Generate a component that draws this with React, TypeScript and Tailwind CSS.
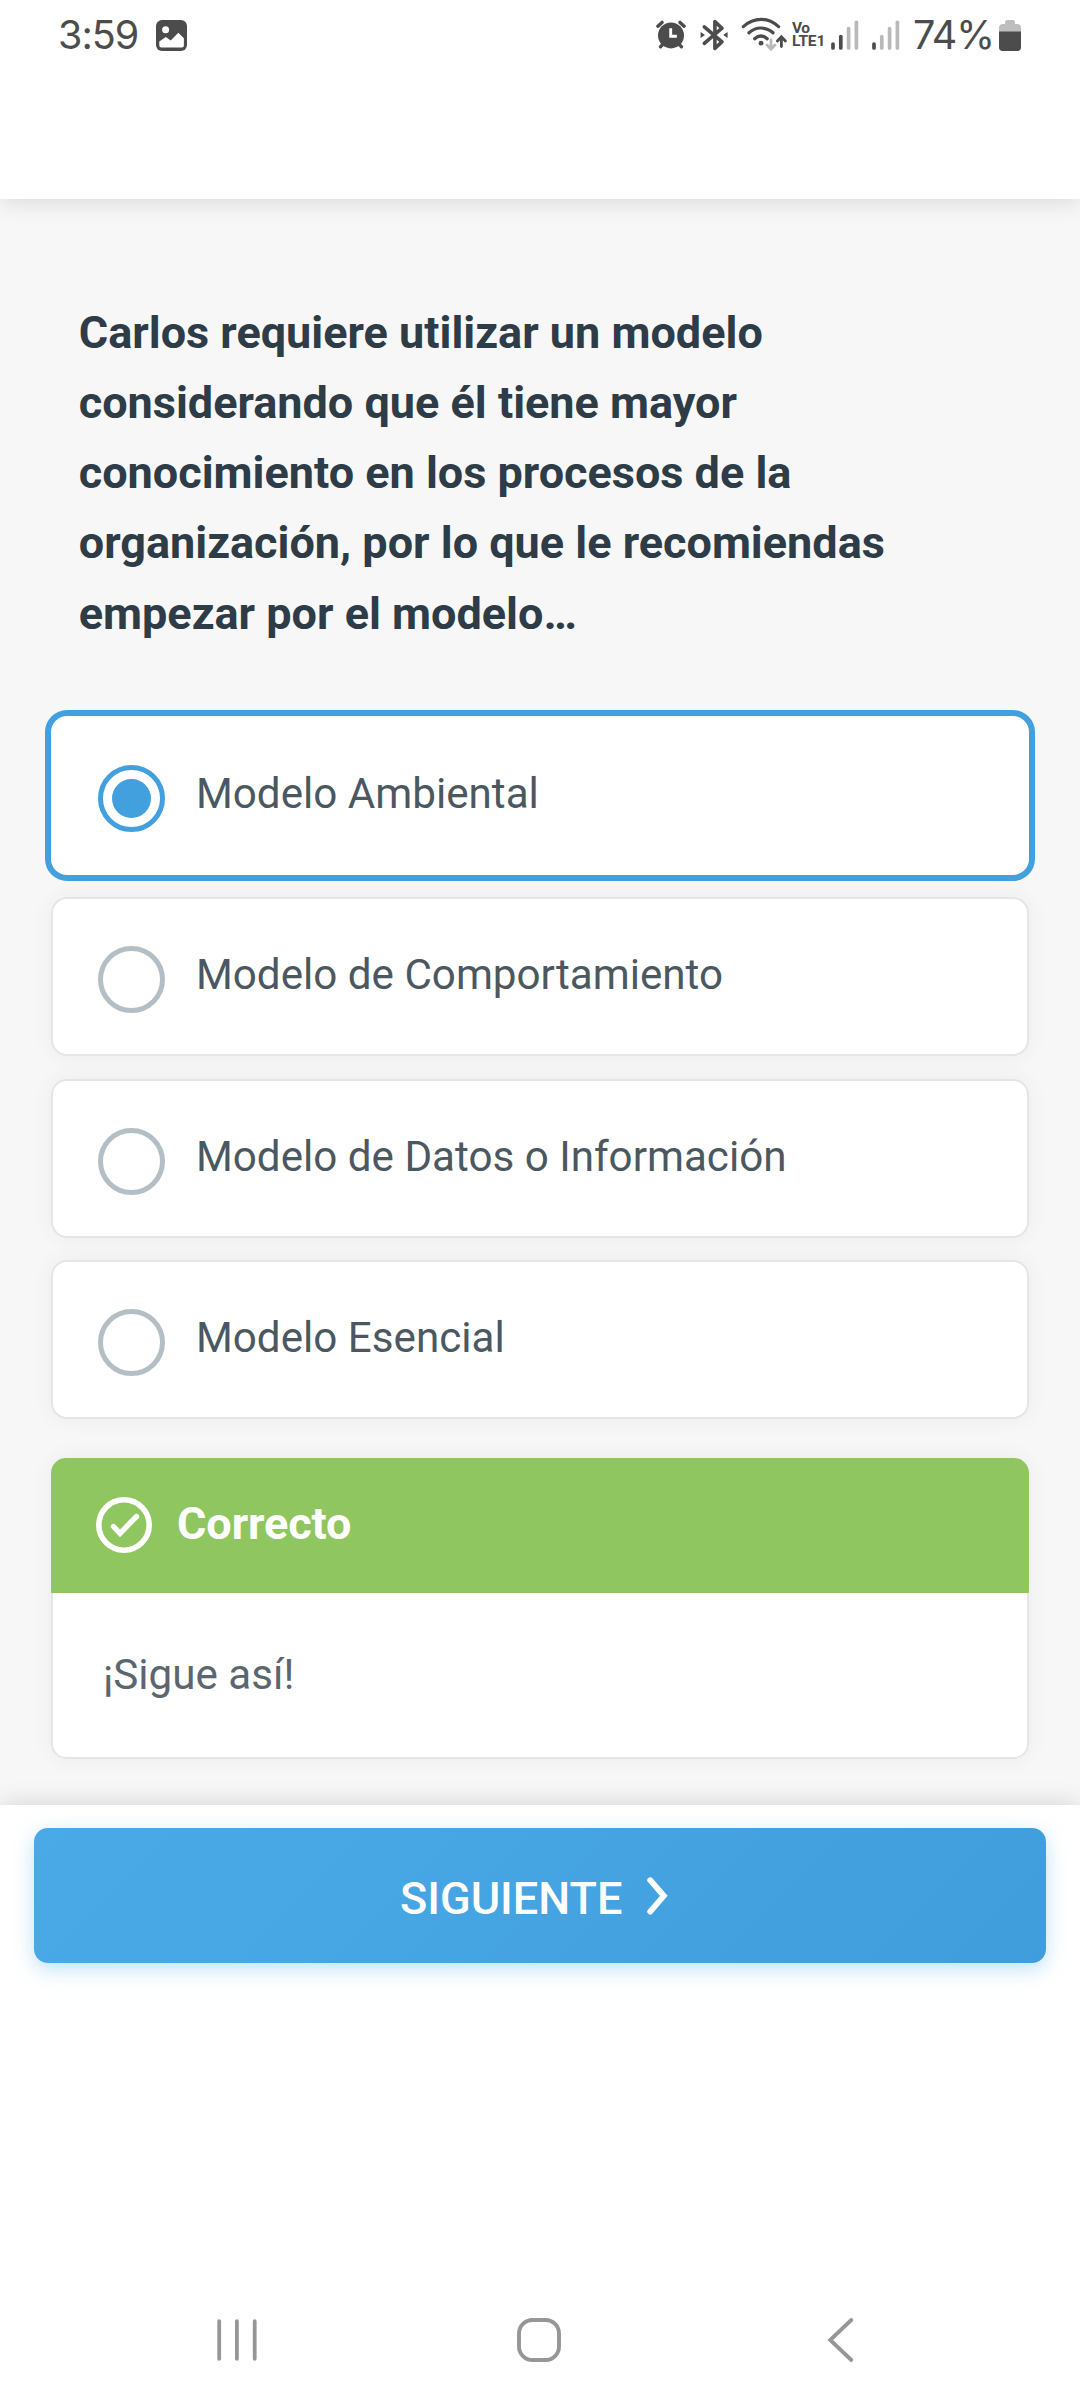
import React from "react";

const options = [
  { label: "Modelo Ambiental", selected: true },
  { label: "Modelo de Comportamiento", selected: false },
  { label: "Modelo de Datos o Información", selected: false },
  { label: "Modelo Esencial", selected: false },
];

function ImageIcon() {
  return (
    <svg className="ml-[18px] mt-5 h-[31px] w-[31px]" viewBox="0 0 31 31">
      <rect width="31" height="31" rx="6" fill="#4c4c4c" />
      <circle cx="9.6" cy="9.8" r="3.5" fill="#fff" />
      <path d="M3.3 21.5 9.8 17l4.9 3.4 7.6-7.7 5.6 5.5v7.4a2 2 0 0 1-2 2H5.3a2 2 0 0 1-2-2z" fill="#fff" />
    </svg>
  );
}

function AlarmIcon() {
  return (
    <svg className="h-[30px] w-[30px]" viewBox="0 0 30 30">
      <g stroke="#4c4c4c" strokeWidth="3.4" strokeLinecap="round">
        <path d="M1.9 6.2 6 2.4M28.1 6.2 24 2.4M4.5 26.8l2-2.2M25.5 26.8l-2-2.2" />
      </g>
      <circle cx="15" cy="15.4" r="13" fill="#4c4c4c" />
      <path d="M14.7 8.2v8h6.2" fill="none" stroke="#fff" strokeWidth="2.9" />
    </svg>
  );
}

function BluetoothIcon() {
  return (
    <svg className="ml-[14px] h-[32px] w-[28px]" viewBox="0 0 28 32">
      <path d="M4.3 7.8 22 22.800l-7.100 6.600V2.600L22 9.200 4.3 24.300" fill="none" stroke="#4c4c4c" strokeWidth="3.6" strokeLinejoin="round" strokeLinecap="round" />
      <path d="M.6 13v6l4.400-3zM27.6 13v6l-4.400-3z" fill="#4c4c4c" />
    </svg>
  );
}

function WifiIcon() {
  return (
    <svg className="ml-[13px] h-[34px] w-[46px]" viewBox="0 0 46 34">
      <g fill="none" stroke="#4c4c4c" strokeWidth="3.200" strokeLinecap="round">
        <path d="M2.3 9.6C13 0 27 0 37.6 9.6M8 15.8c7-6.4 17-6.4 24 0M13.6 21.8c4-3.6 8.6-3.6 12.6 0" />
      </g>
      <circle cx="20" cy="26.2" r="2.4" fill="#4c4c4c" />
      <path d="M30 22.8v9.2M26 28l4 4.2 4-4.2" fill="none" stroke="#b9b9b9" strokeWidth="2.8" strokeLinecap="round" />
      <path d="M40.4 29.5V20M36.4 24l4-4.2 4 4.2" fill="none" stroke="#4c4c4c" strokeWidth="2.8" strokeLinecap="round" />
    </svg>
  );
}

function SignalIcon({ active }: { active: number }) {
  const tops = [23.5, 16, 8.2, 1.8];
  return (
    <svg className="h-[31px] w-[28px]" viewBox="0 0 28 31">
      {tops.map((top, i) => (
        <path
          key={top}
          d={`M${2 + i * 7.8} ${top + 0.5}V28`}
          stroke={i < active ? "#4c4c4c" : "#b9b9b9"}
          strokeWidth="3.7"
          strokeLinecap="round"
        />
      ))}
    </svg>
  );
}

function BatteryIcon() {
  return (
    <svg className="ml-[6px] h-[31px] w-[22px]" viewBox="0 0 22 31">
      <path d="M6 2.5C6 1 6.700 0 8.200 0h5.600C15.300 0 16 1 16 2.500V4h2a4 4 0 0 1 4 4v19a4 4 0 0 1-4 4H4a4 4 0 0 1-4-4V8a4 4 0 0 1 4-4h2z" fill="#bebebe" />
      <path d="M0 11.500h22V27a4 4 0 0 1-4 4H4a4 4 0 0 1-4-4z" fill="#4c4c4c" />
    </svg>
  );
}

function StatusBar() {
  return (
    <div className="flex h-[70px] items-start justify-between pl-[58px] pr-[59px] text-[#4c4c4c]">
      <div className="flex items-start">
        <span className="mt-[11px] w-[80px] whitespace-nowrap font-['Inter'] text-[39.5px] font-normal leading-[48px] tracking-[-1px]">3:59</span>
        <ImageIcon />
      </div>
      <div className="flex items-start">
        <div className="flex pt-5">
          <AlarmIcon />
        </div>
        <div className="flex pt-[19px]">
          <BluetoothIcon />
        </div>
        <div className="flex pt-[17px]">
          <WifiIcon />
        </div>
        <div className="ml-[5px] flex w-[34px] flex-col pt-[21px] font-['Roboto'] text-[15.5px] font-bold">
          <span className="h-[14px] leading-[14px] tracking-[-0.5px]">Vo</span>
          <span className="h-[13px] leading-[13px] tracking-[-0.2px]">LTE1</span>
        </div>
        <div className="ml-[5px] flex gap-[13px] pt-5">
          <SignalIcon active={2} />
          <SignalIcon active={1} />
        </div>
        <span className="ml-[13px] mt-[11px] w-[80px] whitespace-nowrap font-['Inter'] text-[39.5px] font-normal leading-[48px] tracking-[-1.2px]">74%</span>
        <div className="flex pt-5">
          <BatteryIcon />
        </div>
      </div>
    </div>
  );
}

function Option({ label, selected }: { label: string; selected: boolean }) {
  return (
    <div
      className={
        selected
          ? "flex h-[159px] items-start rounded-[16px] bg-white pl-[47px] pt-[49px] ring-6 ring-[#43a0df]"
          : "flex h-[159px] items-start rounded-[16px] border-2 border-[#e5e5e5] bg-white pl-[45px] pt-[47px] shadow-[0_0_22px_rgba(0,0,0,0.05)]"
      }
    >
      <span
        className={
          selected
            ? "flex h-[67px] w-[67px] items-center justify-center rounded-full border-5 border-[#43a0df]"
            : "h-[67px] w-[67px] rounded-full border-5 border-[#b4bec5]"
        }
      >
        {selected && <span className="h-[39px] w-[39px] rounded-full bg-[#43a0df]" />}
      </span>
      <span className="ml-[31px] mt-[4px] text-[42.1875px] leading-[50px] text-[#4b5860]">{label}</span>
    </div>
  );
}

export default function App() {
  return (
    <div className="flex h-[2408px] w-[1080px] flex-col overflow-hidden bg-white font-['Roboto',sans-serif]">
      <header className="relative h-[199px] shrink-0 bg-white shadow-[0_3px_22px_rgba(0,0,0,0.12)]">
        <StatusBar />
      </header>

      <main className="h-[1606px] shrink-0 bg-[#f7f7f7] px-[51px] pt-[98.5px]">
        <h1 className="ml-[27.75px] w-[860px] text-[45px] font-bold leading-[70.3125px] text-[#2d3c47]">
          Carlos requiere utilizar un modelo considerando que él tiene mayor conocimiento en los procesos de la
          organización, por lo que le recomiendas empezar por el modelo…
        </h1>

        <div className="mt-[66.9px] flex flex-col gap-[22.4px]">
          {options.map((o) => (
            <Option key={o.label} label={o.label} selected={o.selected} />
          ))}
        </div>

        <section className="mt-[39px] overflow-hidden rounded-[15px] shadow-[0_0_22px_rgba(0,0,0,0.05)]">
          <div className="flex h-[135px] items-start bg-[#8fc660] pl-[45px] pt-[39px] text-white">
            <svg className="h-[56px] w-[56px]" viewBox="0 0 56 56" fill="none" stroke="currentColor">
              <circle cx="28" cy="28" r="25.200" strokeWidth="5.600" />
              <path d="m17.500 29.500 6.500 6.800L40.500 19.500" strokeWidth="5.400" strokeLinecap="round" />
            </svg>
            <span className="ml-[25px] text-[45px] font-bold leading-[53px] tracking-[-0.1px]">Correcto</span>
          </div>
          <div className="h-[166px] rounded-b-[15px] border-2 border-t-0 border-[#e5e5e5] bg-white pl-[50px] pt-[57px] text-[42.1875px] leading-[50px] text-[#5b666f]">
            ¡Sigue así!
          </div>
        </section>
      </main>

      <footer className="relative flex grow flex-col bg-white shadow-[0_-3px_22px_rgba(0,0,0,0.12)]">
        <div className="h-[471px] px-[34px] pt-[23px]">
          <button className="flex h-[135px] w-full items-start rounded-[14px] bg-linear-135 from-[#4aaae8] to-[#409ddc] pl-[366px] pt-[45px] text-white shadow-[0_6px_20px_rgba(74,170,232,0.35)]">
            <span className="w-[224px] text-left text-[45px] font-medium leading-[52px]">SIGUIENTE</span>
            <svg className="ml-[23px] mt-[4px] h-[38px] w-[21px]" viewBox="0 0 21 38" fill="none" stroke="currentColor">
              <path d="M3.200 3.200 16.800 18.800 3.200 34.600" strokeWidth="5.800" strokeLinecap="round" />
            </svg>
          </button>
        </div>

        <nav className="flex h-[132px] items-center pb-[4px] pl-[217px] text-[#969696]">
          <svg className="h-[44px] w-[40px]" viewBox="0 0 40 44" stroke="currentColor" strokeWidth="3.800" strokeLinecap="round">
            <path d="M2.200 3.200v37.600M19.900 3.200v37.600M37.700 3.200v37.600" />
          </svg>
          <svg className="ml-[260px] h-[44px] w-[44px]" viewBox="0 0 44 44" fill="none" stroke="currentColor" strokeWidth="3.900">
            <rect x="2" y="2" width="40" height="40" rx="13.500" />
          </svg>
          <svg className="ml-[266px] h-[46px] w-[28px]" viewBox="0 0 28 46" fill="none" stroke="currentColor" strokeWidth="3.800" strokeLinecap="round">
            <path d="M24.300 3 3.200 23 24.300 43" />
          </svg>
        </nav>
      </footer>
    </div>
  );
}
